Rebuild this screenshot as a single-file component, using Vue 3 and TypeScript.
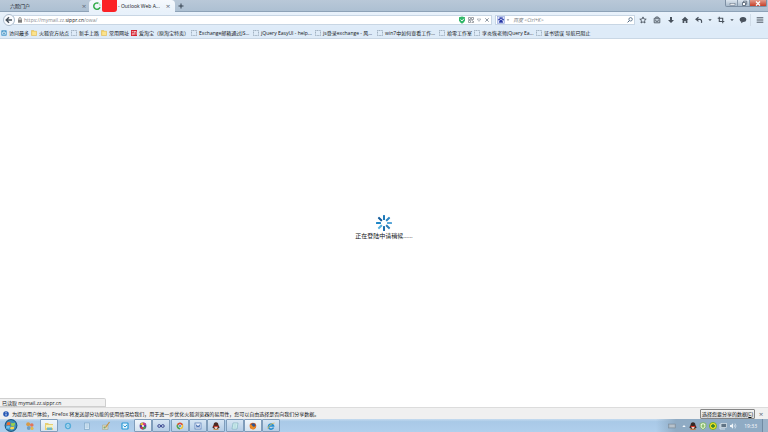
<script setup lang="ts">
interface Bookmark {
  label: string
  icon: 'most' | 'folder' | 'page' | 'shop'
  clipped?: boolean
}

const bookmarks: Bookmark[] = [
  { label: '访问最多', icon: 'most' },
  { label: '火狐官方站点', icon: 'folder' },
  { label: '新手上路', icon: 'page' },
  { label: '常用网址', icon: 'folder' },
  { label: '爱淘宝（原淘宝特卖）', icon: 'shop' },
  { label: 'Exchange邮箱通过JS...', icon: 'page', clipped: true },
  { label: 'jQuery EasyUI - help...', icon: 'page', clipped: true },
  { label: 'js登录exchange - 风...', icon: 'page', clipped: true },
  { label: 'win7中如何查看工作...', icon: 'page', clipped: true },
  { label: '拾零工作室', icon: 'page' },
  { label: '李炎恢老师jQuery Ea...', icon: 'page', clipped: true },
  { label: '证书错误 导航已阻止', icon: 'page' },
]

const spokes: { angle: number; color: string }[] = [
  { angle: 0, color: '#1c78b8' },
  { angle: 45, color: '#2b86c4' },
  { angle: 90, color: '#58a6d8' },
  { angle: 135, color: '#2d7fb9' },
  { angle: 180, color: '#1b6fae' },
  { angle: 225, color: '#56b0dd' },
  { angle: 270, color: '#1f86c6' },
  { angle: 315, color: '#145c9c' },
]
</script>

<template>
  <div class="browser">
    <header>
      <div class="titlebar">
        <div class="tab idle">
          <span class="tab-name">六院门户</span>
          <button class="plain close" aria-label="关闭标签页">×</button>
        </div>
        <div class="tab current">
          <svg class="i8" viewBox="0 0 10 10"><path d="M6.8 1.6A4 4 0 1 0 8.8 6.5" fill="none" stroke="#35ad4b" stroke-width="1.9" /><path d="M7.4 1.8A4 4 0 0 1 9 5" fill="none" stroke="#b9dfc2" stroke-width="1.6" /></svg>
          <span class="redacted"></span>
          <span class="tab-name">- Outlook Web A...</span>
          <button class="plain close" aria-label="关闭标签页">×</button>
        </div>
        <button class="plain add" aria-label="新建标签页">
          <svg class="i6" viewBox="0 0 6 6"><path d="M3 .5v5M.5 3h5" stroke="#34414f" stroke-width="1" /></svg>
        </button>
        <div class="window-buttons">
          <button class="plain" aria-label="最小化"><svg viewBox="0 0 14 7"><rect x="5" y="3.5" width="5" height="1.6" fill="#fff" stroke="#59677a" stroke-width=".5" /></svg></button>
          <button class="plain" aria-label="还原"><svg viewBox="0 0 14 7"><path d="M5.5 2.5h3v3h-3zM6.5 2.5v-1.3h3.2v3h-1.2" fill="#fff" stroke="#4e5d70" stroke-width=".8" /></svg></button>
          <button class="plain exit" aria-label="关闭"><svg viewBox="0 0 14 7"><path d="M5 1.5l4 4M9 1.5l-4 4" stroke="#fff" stroke-width="1.3" /></svg></button>
        </div>
      </div>

      <div class="navbar">
        <button class="plain back" aria-label="后退">
          <svg class="i8" viewBox="0 0 8 8"><path d="M7 4H1.5M4 1.2L1.2 4 4 6.8" fill="none" stroke="#47515c" stroke-width="1.4" /></svg>
        </button>
        <div class="field address">
          <svg class="i6" viewBox="0 0 6 6"><path d="M1.8 3V1.8a1.2 1.2 0 0 1 2.4 0V3" fill="none" stroke="#868686" stroke-width=".9" /><rect x="1" y="2.7" width="4" height="3" fill="#808080" /></svg>
          <a class="url" href="#">https://mymail.zz.<b>sippr.cn</b>/owa/</a>
          <div class="field-icons">
            <svg class="i8" viewBox="0 0 8 8"><path d="M1 1.3L4 .6l3 .7v3Q6.6 6.5 4 7.7 1.4 6.5 1 4.3z" fill="#32b76a" /><path d="M2.5 3.5L4 5l2-2.3" fill="none" stroke="#fff" stroke-width=".9" /></svg>
            <svg class="i6" viewBox="0 0 6 6"><path d="M.5.5h2v2h-2zM3.5.5h2v2h-2zM.5 3.5h2v2h-2zM3.5 3.5h1v1M5.5 4v1.5h-2" fill="none" stroke="#858b92" stroke-width=".8" /></svg>
            <svg class="i6" viewBox="0 0 6 6"><path d="M1.2 2h3.6L3 4.4z" fill="none" stroke="#9ba4ae" stroke-width=".7" /></svg>
            <svg class="i6" viewBox="0 0 6 6"><path d="M1.3 1.3l3.4 3.4M4.7 1.3L1.3 4.7" stroke="#8e98a3" stroke-width="1" /></svg>
          </div>
        </div>
        <div class="field search">
          <svg class="i8" viewBox="0 0 8 8"><rect x=".5" y=".5" width="7" height="7" fill="#dce3fa" stroke="#8ca0da" stroke-width=".6" /><circle cx="2.1" cy="3.6" r=".9" fill="#2434a4" /><circle cx="3.2" cy="2.1" r=".9" fill="#2434a4" /><circle cx="4.9" cy="2.1" r=".9" fill="#2434a4" /><circle cx="6" cy="3.6" r=".9" fill="#2434a4" /><path d="M4 3.2Q5.4 4.5 6.2 6.2 5 7 4 6.6 3 7 1.8 6.2 2.600 4.5 4 3.2z" fill="#2434a4" /></svg>
          <svg class="i4" viewBox="0 0 4 4"><path d="M.7 1.3h2.6L2 2.9z" fill="#8f969e" /></svg>
          <input type="text" aria-label="搜索" placeholder="百度 &lt;Ctrl+K&gt;" />
          <svg class="i6" viewBox="0 0 6 6"><circle cx="3.6" cy="2.3" r="1.7" fill="none" stroke="#48637f" stroke-width=".8" /><path d="M2.4 3.6L.6 5.4" stroke="#48637f" stroke-width="1" /></svg>
        </div>
        <nav class="tools">
          <button class="plain" aria-label="收藏"><svg class="i8" viewBox="0 0 8 8"><path d="M4 .9l.9 2.1 2.3.2-1.7 1.5.5 2.3L4 5.8 2 7l.5-2.3L.8 3.2l2.3-.2z" fill="none" stroke="#49525d" stroke-width=".9" /></svg></button>
          <button class="plain" aria-label="书签"><svg class="i8" viewBox="0 0 8 8"><path d="M1.2 2.3h5.6v4.5H1.2zM2.8 2V1h2.4v1M2.8 3.3v2M5.2 3.3v2M2.8 5.3h2.4" fill="none" stroke="#49525d" stroke-width=".9" /></svg></button>
          <button class="plain" aria-label="下载"><svg class="i8" viewBox="0 0 8 8"><path d="M3 1h2v3h2L4 7 1 4h2z" fill="#49525d" /></svg></button>
          <button class="plain" aria-label="主页"><svg class="i8" viewBox="0 0 8 8"><path d="M4 .8L.6 4h1v3h1.7V5h1.4v2h1.7V4h1z" fill="#49525d" /></svg></button>
          <button class="plain" aria-label="撤销"><svg class="i8" viewBox="0 0 8 8"><path d="M3.5 1.2L1 3.3l2.5 2.1M1.3 3.3H5Q7 3.6 6.5 6.8" fill="none" stroke="#49525d" stroke-width="1.2" /></svg></button>
          <button class="plain drop" aria-label="撤销选项"><svg class="i4" viewBox="0 0 4 4"><path d="M.3 1.2h3.4L2 3z" fill="#49525d" /></svg></button>
          <button class="plain" aria-label="截图"><svg class="i8" viewBox="0 0 8 8"><path d="M2.3.8v4.7h5M.7 2.3h5v5" fill="none" stroke="#49525d" stroke-width="1.1" /></svg></button>
          <button class="plain drop" aria-label="截图选项"><svg class="i4" viewBox="0 0 4 4"><path d="M.3 1.2h3.4L2 3z" fill="#49525d" /></svg></button>
          <button class="plain" aria-label="聊天"><svg class="i8" viewBox="0 0 8 8"><ellipse cx="4" cy="3.6" rx="3.3" ry="2.5" fill="#49525d" /><path d="M2.5 5L2 7.2 4.6 5.8z" fill="#49525d" /></svg></button>
          <button class="plain menu" aria-label="菜单"><svg class="i8" viewBox="0 0 8 8"><path d="M.7 1.8h6.6M.7 4h6.6M.7 6.2h6.6" stroke="#49525d" stroke-width="1" /></svg></button>
        </nav>
      </div>

      <nav class="bookmarks">
        <a v-for="mark in bookmarks" :key="mark.label" href="#" :class="{ clipped: mark.clipped }">
          <svg class="i6" viewBox="0 0 6 6">
            <template v-if="mark.icon === 'most'">
              <rect x=".3" y=".3" width="5.4" height="5.4" rx=".6" fill="#4f9ccc" />
              <path d="M1.2 4.6V2.4L3 1.2l1.8 1.2v2.2z" fill="#d8eefa" /><circle cx="3" cy="3.3" r=".8" fill="#2c78ab" />
            </template>
            <template v-else-if="mark.icon === 'folder'">
              <path d="M.4.5h2.3l.6.7h2.3v4.3H.4z" fill="#f4cd58" stroke="#d7a83b" stroke-width=".4" /><path d="M1.2 1.7h4v3.3h-4z" fill="#fbe38e" />
            </template>
            <template v-else-if="mark.icon === 'shop'">
              <rect width="6" height="6" fill="#d3202d" /><path d="M.8 1.5h1.7M.8 3.2h1.5v1.5H.8M3.3 1v3.8M3.3 1.5h1.8v3.3" fill="none" stroke="#fff" stroke-width=".6" />
            </template>
            <rect v-else x=".5" y=".5" width="5" height="5" fill="none" stroke="#899aab" stroke-width=".8" stroke-dasharray="1 .6" />
          </svg>
          <span>{{ mark.label }}</span>
        </a>
      </nav>
    </header>

    <main>
      <div class="loading" role="status">
        <svg class="spinner" viewBox="-8 -8 16 16">
          <rect v-for="spoke in spokes" :key="spoke.angle" x="-1" y="-8" width="2" height="5" rx=".5" :fill="spoke.color" :transform="`rotate(${spoke.angle})`" />
        </svg>
        <p>正在登陆中请稍候……</p>
      </div>
      <div class="status">已读取 mymail.zz.sippr.cn</div>
    </main>

    <aside class="notice">
      <svg class="i6" viewBox="0 0 6 6"><circle cx="3" cy="3" r="2.8" fill="#2457b4" /><path d="M3 2.6v2M3 1.1v.8" stroke="#fff" stroke-width=".9" /></svg>
      <p>为提高用户体验，Firefox 将发送部分功能的使用情况给我们，用于进一步优化火狐浏览器的易用性，您可以自由选择是否向我们分享数据。</p>
      <button class="choose">选择您要分享的数据(<u>C</u>)</button>
      <button class="plain close" aria-label="关闭通知">×</button>
    </aside>

    <footer>
      <button class="plain orb" aria-label="开始">
        <svg viewBox="0 0 14 13"><circle cx="7" cy="6.5" r="6.4" fill="#1d5780" /><circle cx="7" cy="6.5" r="5.4" fill="#3a8dbb" /><path d="M3 3.5Q5 2.5 6.6 3.4L6 6.3Q4.5 5.5 2.5 6.4z" fill="#ed6b2d" /><path d="M7.4 3.7Q9 4.6 11.2 3.6l-.6 2.8Q8.7 7.4 6.8 6.6z" fill="#9bd04b" /><path d="M2.3 7.2Q4.4 6.2 5.9 7.1l-.6 2.7Q4 9.1 2.1 9.7z" fill="#6bc3f2" /><path d="M6.7 7.4q1.8.9 3.8-.1l-.7 2.7q-1.8.9-3.7.1z" fill="#fbd64b" /></svg>
      </button>
      <div class="pinned">
        <button class="plain" aria-label="应用"><svg class="i10" viewBox="0 0 10 10"><circle cx="3.2" cy="3.2" r="2" fill="#d69a49" /><circle cx="6.8" cy="4" r="1.8" fill="#e17359" /><circle cx="3.8" cy="7" r="2" fill="#6f9ec4" /><circle cx="7" cy="7.4" r="1.6" fill="#e2b94f" /></svg></button>
        <button class="plain lit" aria-label="资源管理器"><svg class="i10" viewBox="0 0 10 10"><path d="M1 2h3l1 1h4v6H1z" fill="#e7cf73" /><path d="M2 4h7v3H2z" fill="#f6f1bd" /><path d="M3 6.5h5V9H3z" fill="#72b8c8" /></svg></button>
        <button class="plain" aria-label="浏览器"><svg class="i8" viewBox="0 0 8 8"><circle cx="4" cy="4" r="2.4" fill="#e6f6ff" stroke="#56acd9" stroke-width="1.5" /><path d="M2.8 4h2.8" stroke="#4b9fce" /></svg></button>
        <button class="plain" aria-label="文档"><svg class="i8" viewBox="0 0 8 8"><rect x="1.5" y="1" width="5" height="6.5" fill="#d3e5f4" stroke="#80a7c7" stroke-width=".7" /><path d="M2.5 3h3M2.5 5h3" stroke="#95b8d3" stroke-width=".6" /></svg></button>
        <button class="plain" aria-label="画图"><svg class="i10" viewBox="0 0 10 10"><path d="M1.5 4h5.5v4.5H1.5z" fill="#d9d7bd" stroke="#a5aa99" stroke-width=".6" /><path d="M8.5 1L4.5 6.5" stroke="#c6933f" stroke-width="1.2" /><circle cx="3.5" cy="6.5" r="1" fill="#79aa79" /></svg></button>
        <button class="plain" aria-label="邮件"><svg class="i8" viewBox="0 0 8 8"><rect x="1" y="1" width="6" height="6" rx=".5" fill="#e5f5fd" stroke="#2998d5" stroke-width="1.2" /><path d="M2.5 3.5L4 5l2-2" fill="none" stroke="#2998d5" /></svg></button>
      </div>
      <div class="running">
        <button class="plain active" aria-label="图形"><svg class="i8" viewBox="0 0 8 8"><circle cx="4" cy="4" r="3.4" fill="#4b3d9f" /><path d="M4 4L1 2.4A3.4 3.4 0 0 1 4 .6z" fill="#e3bd36" /><path d="M4 4V.6a3.400 3.400 0 0 1 3.2 2.200z" fill="#d5407f" /><path d="M4 4l3.200 1A3.400 3.400 0 0 1 4 7.400z" fill="#4c9c52" /><path d="M4 4v3.400A3.400 3.400 0 0 1 1 5.600z" fill="#ca3f41" /><circle cx="4" cy="4" r="1" fill="#fff" /></svg></button>
        <button class="plain" aria-label="链接"><svg class="i8" viewBox="0 0 8 8"><circle cx="2.2" cy="4" r="1.4" fill="none" stroke="#3e4a91" /><circle cx="5.8" cy="4" r="1.4" fill="none" stroke="#3e4a91" /></svg></button>
      </div>
      <div class="running">
        <button class="plain" aria-label="Chrome"><svg class="i8" viewBox="0 0 8 8"><circle cx="4" cy="4" r="3.3" fill="#edc339" /><path d="M4 4L1 2.4A3.4 3.4 0 0 1 7 2.4z" fill="#d74b3d" /><path d="M4 4L1 2.4A3.4 3.4 0 0 0 4 7.4z" fill="#4ca35a" /><circle cx="4" cy="4" r="1.5" fill="#4386cc" stroke="#fff" stroke-width=".6" /></svg></button>
        <button class="plain" aria-label="Word"><svg class="i8" viewBox="0 0 8 8"><rect x="1" y="1" width="6" height="6" fill="#eff5ff" stroke="#5f82b8" stroke-width=".8" /><path d="M2.3 2.6L3 5.5l1-2 1 2 .7-2.9" fill="none" stroke="#345ea4" stroke-width=".8" /></svg></button>
        <button class="plain" aria-label="QQ"><svg class="i8" viewBox="0 0 8 8"><path d="M4 .3q2.300 0 2.400 2.700l1.300 2.500-1 .5Q6 7.500 4 7.500T1.300 6l-1-.5L1.600 3Q1.700.3 4 .3z" fill="#4a2a22" /><ellipse cx="4" cy="5.5" rx="1.5" ry="1.6" fill="#f3ece6" /><path d="M1.600 3.600q2.400 1.200 4.800 0v1q-2.400 1.200-4.800 0z" fill="#d9382b" /><path d="M1.3 7.3h5.4" stroke="#dd943b" stroke-width=".8" /></svg></button>
      </div>
      <div class="running">
        <button class="plain" aria-label="记事本"><svg class="i8" viewBox="0 0 8 8"><path d="M2 1h5L6 7H1z" fill="#d9f2f4" stroke="#75aab7" stroke-width=".6" /><path d="M2.5 3h3M2.3 5h3" stroke="#78bbc0" stroke-width=".6" /></svg></button>
        <button class="plain active" aria-label="Firefox"><svg class="i8" viewBox="0 0 8 8"><circle cx="4" cy="4" r="3.3" fill="#d65b20" /><circle cx="4.2" cy="3.3" r="2" fill="#2f5795" /><path d="M.8 2.5Q3 2.5 4 4.5q1.5.8 3-.5Q6.5 7.4 4 7.4.8 7 .8 2.5z" fill="#e98b29" /></svg></button>
        <button class="plain" aria-label="Internet Explorer"><svg class="i8" viewBox="0 0 8 8"><path d="M6.5 5.5A2.6 2.6 0 1 1 6.6 4H2" fill="none" stroke="#268dcd" stroke-width="1.5" /><path d="M.8 6.8Q2 2 7.5 1" fill="none" stroke="#e1ba4c" stroke-width=".8" /></svg></button>
      </div>
      <div class="tray">
        <svg class="i8" viewBox="0 0 8 8"><rect x=".5" y="2" width="7" height="4" fill="#a0adb9" stroke="#788896" stroke-width=".5" /><path d="M1.5 3.3h5M1.5 4.7h5" stroke="#dbe2e7" stroke-width=".5" /></svg>
        <svg class="i4 caret" viewBox="0 0 4 4"><path d="M.3 3L2 1l1.7 2z" fill="#f3f8fc" /></svg>
        <svg class="i8" viewBox="0 0 8 8"><path d="M4 .3q2.300 0 2.400 2.700l1.300 2.500-1 .5Q6 7.500 4 7.500T1.300 6l-1-.5L1.600 3Q1.700.3 4 .3z" fill="#352723" /><ellipse cx="4" cy="5.6" rx="1.4" ry="1.4" fill="#f3ece6" /><path d="M1.600 3.400q2.400 1.200 4.800 0v1.200q-2.400 1.200-4.800 0z" fill="#df3022" /><path d="M1 7.2h6" stroke="#d77b31" stroke-width=".9" /></svg>
        <svg class="i8" viewBox="0 0 8 8"><path d="M1.2 1.5L4 .7l2.8.8v3Q6.2 6.6 4 7.5 1.8 6.6 1.2 4.5z" fill="#edf7df" stroke="#71b350" stroke-width=".8" /><path d="M4 2v4M2.5 4h3" stroke="#63a542" stroke-width=".9" /></svg>
        <svg class="i8" viewBox="0 0 8 8"><circle cx="4" cy="4" r="3.6" fill="#f1dc22" stroke="#5eac26" stroke-width=".8" /><path d="M4 2v4M2 4h4" stroke="#267d2c" stroke-width="1.3" /></svg>
        <svg class="i8" viewBox="0 0 8 8"><rect x="2" y="1.5" width="5.5" height="4" fill="#5f7385" stroke="#e2ebf1" stroke-width=".7" /><path d="M1 2v5h5" fill="none" stroke="#e2ebf1" stroke-width=".8" /></svg>
        <svg class="i8" viewBox="0 0 8 8"><path d="M1 3h1.2L4 1.3v5.4L2.2 5H1z" fill="#eef4f8" /><path d="M5 2.7q1 1.3 0 2.6M6 1.5q2 2.5 0 5" fill="none" stroke="#eef4f8" stroke-width=".6" /></svg>
        <time>19:33</time>
        <button class="plain desktop" aria-label="显示桌面"></button>
      </div>
    </footer>
  </div>
</template>

<style>
body {
  margin: 0;
}
</style>

<style scoped>
.browser {
  display: flex;
  flex-direction: column;
  min-height: 100vh;
  background: #fff;
  color: #111417;
  font: 5px/8px "Open Sans", "Noto Sans CJK SC", sans-serif;
}

.browser * {
  box-sizing: border-box;
}

svg {
  display: block;
  flex: none;
}

p {
  margin: 0;
}

a {
  color: inherit;
  text-decoration: none;
}

.i4 { width: 4px; height: 4px; }
.i6 { width: 6px; height: 6px; }
.i8 { width: 8px; height: 8px; }
.i10 { width: 10px; height: 10px; }

.plain {
  display: flex;
  align-items: center;
  justify-content: center;
  padding: 0;
  border: 0;
  background: none;
  color: inherit;
  font: inherit;
}

.close {
  width: 6px;
  color: #626d79;
  font-size: 8px;
}

.titlebar {
  display: flex;
  align-items: flex-end;
  height: 12px;
  background: linear-gradient(#b9c8d8, #adc0d2);
  border-bottom: 1px solid #8da2b7;
}

.tab {
  display: flex;
  align-items: center;
  height: 11px;
}

.tab-name {
  flex: 1;
  white-space: nowrap;
}

.idle {
  width: 89px;
  padding: 0 2px 0 10px;
}

.current {
  width: 86px;
  height: 12px;
  margin-bottom: -1px;
  padding: 0 4px;
  gap: 1px;
  border-radius: 4px 4px 0 0;
  background: linear-gradient(#f6f9fd, #e8f1fa);
}

.redacted {
  align-self: stretch;
  width: 15px;
  border-radius: 0 0 3px 2px;
  background: #fb2125;
}

.add {
  width: 12px;
  height: 11px;
}

.window-buttons {
  display: flex;
  align-self: flex-start;
  height: 7px;
  margin: 0 1px 0 auto;
  border: 1px solid #7d8fa3;
  border-top: 0;
  border-radius: 0 0 2px 2px;
  background: linear-gradient(#dce5ee, #a9bacb);
}

.window-buttons button {
  width: 12px;
  border-right: 1px solid #8798aa;
}

.window-buttons svg {
  width: 14px;
  height: 7px;
}

.window-buttons .exit {
  width: 16px;
  border: 0;
  background: linear-gradient(#e39b8c, #c63f29);
}

.navbar {
  display: flex;
  align-items: center;
  height: 16px;
  padding-left: 3px;
  background: linear-gradient(#e9f2fb, #deebf8);
}

.back {
  z-index: 1;
  width: 12px;
  height: 12px;
  border: 1px solid #adbdce;
  border-radius: 50%;
  background: #fafcff;
}

.field {
  display: flex;
  align-items: center;
  height: 10px;
  border: 1px solid #c8d6e4;
  background: #fff;
}

.address {
  flex: 480;
  margin-left: -2px;
  padding: 0 1px 0 3px;
  gap: 1px;
}

.url {
  flex: 1;
  color: #858a90;
}

.url b {
  color: #111417;
  font-weight: 400;
}

.field-icons {
  display: flex;
  align-items: center;
  gap: 2px;
}

.search {
  flex: 138;
  margin: 0 1px 0 3px;
  padding: 0 1px;
  gap: 1px;
}

.search input {
  flex: 1;
  min-width: 0;
  padding: 0 2px;
  border: 0;
  outline: 0;
  background: none;
  font: italic 5px/8px "Open Sans", "Noto Sans CJK SC", sans-serif;
}

.search input::placeholder {
  color: #777d84;
}

.tools {
  display: flex;
  align-items: center;
}

.tools button {
  width: 14px;
  height: 12px;
}

.tools .drop {
  width: 8px;
}

.tools .menu {
  width: 18px;
  border-left: 1px solid #d0dce8;
}

.bookmarks {
  display: flex;
  align-items: center;
  height: 11px;
  padding: 0 1px;
  gap: 2px;
  background: #deebf8;
  border-bottom: 1px solid #c9d7e5;
  white-space: nowrap;
}

.bookmarks a {
  display: flex;
  align-items: center;
  gap: 2px;
}

.bookmarks .clipped {
  width: 60px;
}

main {
  display: flex;
  flex: 1;
  flex-direction: column;
}

.loading {
  display: flex;
  flex: 1;
  flex-direction: column;
  align-items: center;
  justify-content: center;
  gap: 1px;
  padding-top: 18px;
  font-size: 6px;
}

.spinner {
  width: 16px;
  height: 16px;
}

.status {
  width: 106px;
  height: 9px;
  padding-left: 2px;
  border: 1px solid #cfcfcf;
  border-left: 0;
  border-radius: 0 2px 0 0;
  background: #f1f1f1;
}

.notice {
  display: flex;
  align-items: center;
  height: 12px;
  padding: 0 4px 0 3px;
  gap: 3px;
  background: #f0f0f0;
  border-top: 1px solid #dcdcdc;
}

.notice p {
  flex: 1;
  white-space: nowrap;
}

.choose {
  height: 10px;
  padding: 0 1px;
  border: 1px solid #858585;
  border-radius: 1px;
  background: linear-gradient(#f4f4f4, #dadada);
  color: inherit;
  font: inherit;
}

footer {
  display: flex;
  align-items: center;
  height: 13px;
  padding-left: 4px;
  background: linear-gradient(#c5dbef, #a9c9e7 20%, #b0cfec);
}

.orb svg {
  width: 14px;
  height: 13px;
}

.pinned,
.running {
  display: flex;
}

.pinned {
  gap: 1px;
  padding-left: 3px;
}

.running {
  margin-right: 1px;
}

.pinned button,
.running button {
  width: 18px;
  height: 13px;
}

.pinned .lit,
.running button {
  border: 1px solid #7f9dbb;
  border-radius: 1px;
  background: linear-gradient(#d6e5f3, #b4cde6);
}

.pinned .lit,
.running .active {
  background: linear-gradient(#f0f6fb, #d3e2f0);
}

.tray {
  display: flex;
  align-items: center;
  align-self: stretch;
  margin-left: auto;
  padding-left: 12px;
  gap: 2px;
  background: linear-gradient(90deg, transparent, #8fabc4 20px);
  color: #fff;
}

.caret {
  margin: 0 1px 0 4px;
}

time {
  padding: 0 3px 0 5px;
}

.desktop {
  align-self: stretch;
  width: 6px;
  border-left: 1px solid #718ba3;
  background: #9bb3c9;
}
</style>
